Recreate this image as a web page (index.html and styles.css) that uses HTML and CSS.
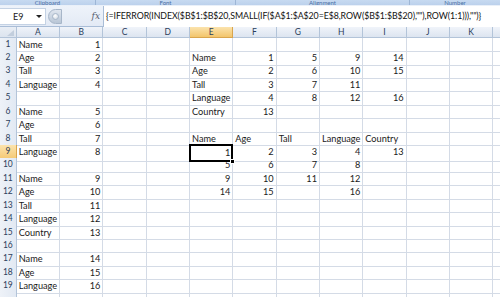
FILE: index.html
```html
<!DOCTYPE html>
<html lang="en">
<head>
  <meta charset="UTF-8">
  <meta name="viewport" content="width=device-width, initial-scale=1">
  <title>Book1 - Excel</title>
  <link rel="stylesheet" href="styles.css">
</head>
<body>

  <div class="ribbon">
    <div class="group g-clip"><span>Clipboard</span></div>
    <div class="group g-font"><span>Font</span></div>
    <div class="group g-align"><span>Alignment</span></div>
    <div class="group g-num"><span>Number</span></div>
  </div>

  <div class="formula-bar">
    <div class="name-box">
      <span class="name">E9</span>
      <span class="drop"></span>
    </div>
    <div class="grip"><span class="knob"></span></div>
    <div class="fx-area"><span class="fx">fx</span></div>
    <div class="formula">{=IFERROR(INDEX($B$1:$B$20,SMALL(IF($A$1:$A$20=E$8,ROW($B$1:$B$20),""),ROW(1:1))),"")}</div>
  </div>

  <div class="sheet">
    <div class="row head">
      <div class="corner"></div>
      <div class="ch">A</div><div class="ch">B</div><div class="ch">C</div><div class="ch">D</div>
      <div class="ch sel">E</div><div class="ch">F</div><div class="ch">G</div><div class="ch">H</div>
      <div class="ch">I</div><div class="ch">J</div><div class="ch">K</div><div class="ch"></div>
    </div>

    <div class="row">
      <div class="rh">1</div>
      <div class="c">Name</div><div class="c n">1</div><div class="c"></div><div class="c"></div>
      <div class="c"></div><div class="c"></div><div class="c"></div><div class="c"></div>
      <div class="c"></div><div class="c"></div><div class="c"></div><div class="c"></div>
    </div>
    <div class="row">
      <div class="rh">2</div>
      <div class="c">Age</div><div class="c n">2</div><div class="c"></div><div class="c"></div>
      <div class="c">Name</div><div class="c n">1</div><div class="c n">5</div><div class="c n">9</div>
      <div class="c n">14</div><div class="c"></div><div class="c"></div><div class="c"></div>
    </div>
    <div class="row">
      <div class="rh">3</div>
      <div class="c">Tall</div><div class="c n">3</div><div class="c"></div><div class="c"></div>
      <div class="c">Age</div><div class="c n">2</div><div class="c n">6</div><div class="c n">10</div>
      <div class="c n">15</div><div class="c"></div><div class="c"></div><div class="c"></div>
    </div>
    <div class="row">
      <div class="rh">4</div>
      <div class="c">Language</div><div class="c n">4</div><div class="c"></div><div class="c"></div>
      <div class="c">Tall</div><div class="c n">3</div><div class="c n">7</div><div class="c n">11</div>
      <div class="c"></div><div class="c"></div><div class="c"></div><div class="c"></div>
    </div>
    <div class="row">
      <div class="rh">5</div>
      <div class="c"></div><div class="c"></div><div class="c"></div><div class="c"></div>
      <div class="c">Language</div><div class="c n">4</div><div class="c n">8</div><div class="c n">12</div>
      <div class="c n">16</div><div class="c"></div><div class="c"></div><div class="c"></div>
    </div>
    <div class="row">
      <div class="rh">6</div>
      <div class="c">Name</div><div class="c n">5</div><div class="c"></div><div class="c"></div>
      <div class="c">Country</div><div class="c n">13</div><div class="c"></div><div class="c"></div>
      <div class="c"></div><div class="c"></div><div class="c"></div><div class="c"></div>
    </div>
    <div class="row">
      <div class="rh">7</div>
      <div class="c">Age</div><div class="c n">6</div><div class="c"></div><div class="c"></div>
      <div class="c"></div><div class="c"></div><div class="c"></div><div class="c"></div>
      <div class="c"></div><div class="c"></div><div class="c"></div><div class="c"></div>
    </div>
    <div class="row">
      <div class="rh">8</div>
      <div class="c">Tall</div><div class="c n">7</div><div class="c"></div><div class="c"></div>
      <div class="c">Name</div><div class="c">Age</div><div class="c">Tall</div><div class="c">Language</div>
      <div class="c">Country</div><div class="c"></div><div class="c"></div><div class="c"></div>
    </div>
    <div class="row">
      <div class="rh sel">9</div>
      <div class="c">Language</div><div class="c n">8</div><div class="c"></div><div class="c"></div>
      <div class="c n active">1<span class="handle"></span></div><div class="c n">2</div><div class="c n">3</div><div class="c n">4</div>
      <div class="c n">13</div><div class="c"></div><div class="c"></div><div class="c"></div>
    </div>
    <div class="row">
      <div class="rh">10</div>
      <div class="c"></div><div class="c"></div><div class="c"></div><div class="c"></div>
      <div class="c n">5</div><div class="c n">6</div><div class="c n">7</div><div class="c n">8</div>
      <div class="c"></div><div class="c"></div><div class="c"></div><div class="c"></div>
    </div>
    <div class="row">
      <div class="rh">11</div>
      <div class="c">Name</div><div class="c n">9</div><div class="c"></div><div class="c"></div>
      <div class="c n">9</div><div class="c n">10</div><div class="c n">11</div><div class="c n">12</div>
      <div class="c"></div><div class="c"></div><div class="c"></div><div class="c"></div>
    </div>
    <div class="row">
      <div class="rh">12</div>
      <div class="c">Age</div><div class="c n">10</div><div class="c"></div><div class="c"></div>
      <div class="c n">14</div><div class="c n">15</div><div class="c"></div><div class="c n">16</div>
      <div class="c"></div><div class="c"></div><div class="c"></div><div class="c"></div>
    </div>
    <div class="row">
      <div class="rh">13</div>
      <div class="c">Tall</div><div class="c n">11</div><div class="c"></div><div class="c"></div>
      <div class="c"></div><div class="c"></div><div class="c"></div><div class="c"></div>
      <div class="c"></div><div class="c"></div><div class="c"></div><div class="c"></div>
    </div>
    <div class="row">
      <div class="rh">14</div>
      <div class="c">Language</div><div class="c n">12</div><div class="c"></div><div class="c"></div>
      <div class="c"></div><div class="c"></div><div class="c"></div><div class="c"></div>
      <div class="c"></div><div class="c"></div><div class="c"></div><div class="c"></div>
    </div>
    <div class="row">
      <div class="rh">15</div>
      <div class="c">Country</div><div class="c n">13</div><div class="c"></div><div class="c"></div>
      <div class="c"></div><div class="c"></div><div class="c"></div><div class="c"></div>
      <div class="c"></div><div class="c"></div><div class="c"></div><div class="c"></div>
    </div>
    <div class="row">
      <div class="rh">16</div>
      <div class="c"></div><div class="c"></div><div class="c"></div><div class="c"></div>
      <div class="c"></div><div class="c"></div><div class="c"></div><div class="c"></div>
      <div class="c"></div><div class="c"></div><div class="c"></div><div class="c"></div>
    </div>
    <div class="row">
      <div class="rh">17</div>
      <div class="c">Name</div><div class="c n">14</div><div class="c"></div><div class="c"></div>
      <div class="c"></div><div class="c"></div><div class="c"></div><div class="c"></div>
      <div class="c"></div><div class="c"></div><div class="c"></div><div class="c"></div>
    </div>
    <div class="row">
      <div class="rh">18</div>
      <div class="c">Age</div><div class="c n">15</div><div class="c"></div><div class="c"></div>
      <div class="c"></div><div class="c"></div><div class="c"></div><div class="c"></div>
      <div class="c"></div><div class="c"></div><div class="c"></div><div class="c"></div>
    </div>
    <div class="row">
      <div class="rh">19</div>
      <div class="c">Language</div><div class="c n">16</div><div class="c"></div><div class="c"></div>
      <div class="c"></div><div class="c"></div><div class="c"></div><div class="c"></div>
      <div class="c"></div><div class="c"></div><div class="c"></div><div class="c"></div>
    </div>
    <div class="row">
      <div class="rh"></div>
      <div class="c"></div><div class="c"></div><div class="c"></div><div class="c"></div>
      <div class="c"></div><div class="c"></div><div class="c"></div><div class="c"></div>
      <div class="c"></div><div class="c"></div><div class="c"></div><div class="c"></div>
    </div>
  </div>

</body>
</html>
```

FILE: styles.css
```css
:root {
  --grid-color: #d4dbe6;
  --head-border: #b3c4d9;
  --head-text: #2b3e5c;
  --col-width: 43.33px;
  --row-height: 13.43px;
  --head-width: 16.7px;
}

* {
  box-sizing: border-box;
  margin: 0;
  padding: 0;
}

body {
  width: 500px;
  height: 297px;
  overflow: hidden;
  background: #fff;
  color: #1a1a1a;
  font-family: Lato, "Liberation Sans", sans-serif;
  font-size: 9.2px;
}

/* bottom of the ribbon, only the group captions peek out */
.ribbon {
  height: 6px;
  display: flex;
  background: linear-gradient(#c7daf1, #bcd1ec);
  overflow: hidden;
  border-bottom: 1px solid #e9f0f9;
}

.group {
  border-right: 1px solid #9db6d6;
  text-align: center;
  color: #4a6fa5;
  font-size: 6px;
  line-height: 6px;
}

.g-clip { width: 96px; }
.g-font { width: 140px; }
.g-align { width: 174px; }
.g-num { flex: 1; border-right: none; }

.formula-bar {
  height: 21px;
  display: flex;
  align-items: center;
  background: linear-gradient(#eef3fa, #e3eaf5);
  border-bottom: 1px solid #a9bdd7;
}

.name-box {
  width: 46px;
  height: 17px;
  display: flex;
  align-items: center;
  justify-content: space-between;
  padding: 0 3px 0 13px;
  background: #fff;
  border: 1px solid #c4d2e4;
  border-left: none;
  font-size: 9px;
}

.drop {
  width: 0;
  height: 0;
  border-left: 3px solid transparent;
  border-right: 3px solid transparent;
  border-top: 3px solid #222;
}

.grip {
  width: 14px;
  height: 15px;
  margin-left: 2px;
  border-radius: 8px 0 0 8px;
  background: linear-gradient(#dfe6ef, #b9c6d6);
  border: 1px solid #a7b6c9;
  display: flex;
  align-items: center;
  justify-content: center;
}

.knob {
  width: 7px;
  height: 7px;
  border-radius: 50%;
  background: radial-gradient(circle at 40% 35%, #fff, #c9d3df);
  border: 1px solid #a9b8ca;
}

.fx-area {
  width: 41px;
  height: 17px;
  display: flex;
  align-items: center;
  justify-content: flex-end;
  padding-right: 3px;
}

.fx {
  font-family: "DejaVu Serif", serif;
  font-style: italic;
  font-size: 9px;
  color: #55606e;
}

.formula {
  flex: 1;
  height: 21px;
  line-height: 20px;
  padding-left: 2px;
  background: #fff;
  border-left: 1px solid #a9bdd7;
  white-space: nowrap;
  overflow: hidden;
  font-size: 8.8px;
  letter-spacing: -0.08px;
  color: #111;
}

.sheet {
  width: 500px;
  overflow: hidden;
}

.row {
  display: grid;
  grid-template-columns: var(--head-width) repeat(12, var(--col-width));
  height: var(--row-height);
}

.row.head {
  height: 10.6px;
}

.corner {
  background: linear-gradient(#e9eef5, #dce4ef);
  border-right: 1px solid var(--head-border);
  border-bottom: 1px solid var(--head-border);
  position: relative;
}

.corner::after {
  content: "";
  position: absolute;
  right: 2px;
  bottom: 1px;
  width: 0;
  height: 0;
  border-left: 7px solid transparent;
  border-bottom: 6px solid #c2cedd;
}

.ch {
  background: linear-gradient(#f0f4fa, #dde5f0);
  border-right: 1px solid var(--head-border);
  border-bottom: 1px solid var(--head-border);
  color: var(--head-text);
  text-align: center;
  line-height: 10px;
  font-size: 8.5px;
}

.ch.sel, .rh.sel {
  background: linear-gradient(#fbe3ad, #f3c56b);
  border-color: #d9a54d;
}

.rh {
  background: linear-gradient(90deg, #eef2f8, #e2e9f3);
  border-right: 1px solid var(--head-border);
  border-bottom: 1px solid var(--head-border);
  color: var(--head-text);
  text-align: center;
  line-height: 13px;
  font-size: 8.5px;
}

.c {
  position: relative;
  border-right: 1px solid var(--grid-color);
  border-bottom: 1px solid var(--grid-color);
  padding: 0 2px;
  line-height: 13.6px;
  white-space: nowrap;
}

.c.n {
  text-align: right;
}

.c.active {
  border: 2px solid #000;
  margin: -1px 0 0 -1px;
  padding-right: 1px;
  z-index: 1;
}

.handle {
  position: absolute;
  right: -4px;
  bottom: -4px;
  width: 5px;
  height: 5px;
  background: #000;
  border: 1px solid #fff;
}
```
